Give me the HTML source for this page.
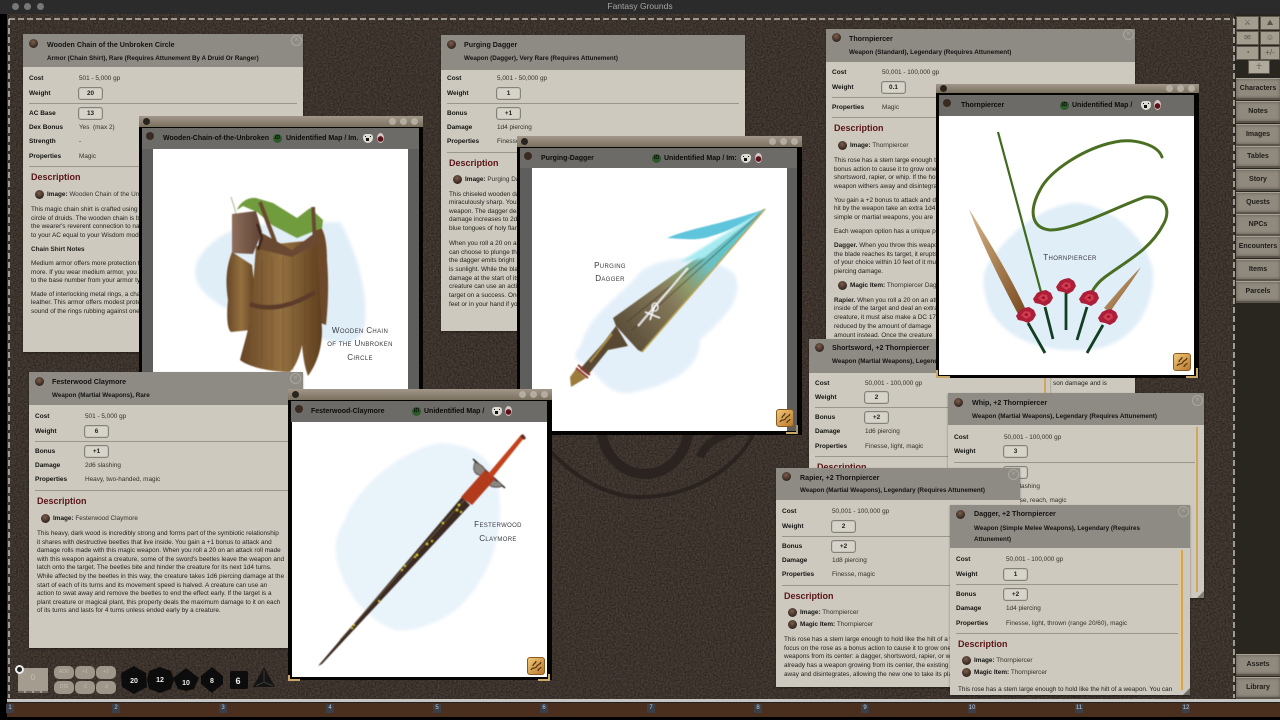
<!DOCTYPE html>
<html><head><meta charset="utf-8"><title>Fantasy Grounds</title>
<style>
html,body{margin:0;padding:0;width:1280px;height:720px;overflow:hidden;background:#000}
body{position:relative;font-family:"Liberation Sans",sans-serif;filter:blur(.3px)}
svg{position:absolute;left:0;top:0}
.tb{position:absolute;left:0;top:0;width:1280px;height:14px;background:#2b2b2b;color:#a5a5a5;font-size:8.5px;line-height:12px;text-align:center}
.dot{position:absolute;top:3px;width:7px;height:7px;border-radius:50%;background:#777}
.p{position:absolute;background:#cdc9be;overflow:hidden;color:#1f1e1b;font-size:6.4px;box-shadow:0 1px 2px #0006}
.p>*{position:absolute;white-space:nowrap;line-height:10px}
.h{left:0;top:0;width:100%;background:#8e8b85}
.t{left:24px;top:5px;font-weight:bold;font-size:7.1px;color:#141311}
.s{left:24px;top:19px;font-weight:bold;font-size:6.3px;color:#141311}
.l{left:6px;font-weight:bold;font-size:6.5px;color:#141311;margin-top:1px}
.v{left:56px;color:#33312c;margin-top:1px}
.b{left:55px;width:23px;height:11px;border:1px solid #85827a;border-radius:3px;background:#d6d3c9;text-align:center;font-weight:bold;line-height:11px!important;box-shadow:inset 0 0 1px #777;margin-top:1px}
.r{left:6px;right:6px;height:1px;background:#9a968a}
.d{left:8px;font-weight:bold;font-size:9px;line-height:12px!important;color:#5a1517}
.x{left:8px;color:#1f1e1a;margin-top:1px}
.o{left:12px;width:9px;height:9px;border-radius:50%;background:radial-gradient(circle at 45% 35%,#7c5e4c,#33261f 70%);margin-top:1px}
.i{left:24px;color:#33312c;margin-top:1px}.i b{color:#141311}
.c{width:9px;height:9px;border:1px solid #aaa79e;border-radius:50%;color:#aaa79e;font-size:8px;line-height:8px!important;text-align:center;box-sizing:content-box}
.g{width:2px;background:#cfa65c;border-left:1px solid #e7c98f}
.w{position:absolute;background:#050403}
.w>*{position:absolute}
.st{left:0;top:0;right:0;background:linear-gradient(#a2978a,#7a705e)}
.st>*{position:absolute}
.wh{background:#6d6b67;font-size:7px;font-weight:bold;color:#0d0c0a;line-height:21px;white-space:nowrap;overflow:hidden}
.wh>*{position:absolute}
.fr{background:#5e5e5d}
.im{background:#fff;overflow:hidden}
.id{width:9px;height:9px;border-radius:50%;background:#2d5a2a;color:#0d0d0b;font-size:5.5px;line-height:9px;text-align:center;top:6px}
.si{width:10px;height:9px;top:6px;border-radius:3px 3px 5px 5px;background:#dedbd2}
.si:before{content:"";position:absolute;left:2px;top:2px;width:1px;height:1px;background:#111;box-shadow:5px 0 #111,2px 3px 0 1px #111}
.ri{width:7px;height:10px;top:5px;border-radius:50%;background:radial-gradient(circle at 50% 60%,#5c1018 35%,#d8c8c4 45%)}
.wo{width:7px;height:7px;left:4px;top:2px;border-radius:50%;background:#2a241e}
.bt{width:7px;height:7px;top:2px;border-radius:50%;background:#c0bbb0;opacity:.75}
.ti{position:absolute;text-align:center;color:#3a3a40;font-size:8.1px;font-variant:small-caps;letter-spacing:.35px;white-space:nowrap;line-height:10px}
.sb{position:absolute;left:1236px;width:44px;height:19px;background:#8f897e;border-top:1px solid #a8a296;border-bottom:2px solid #5a544b;box-sizing:content-box;font-weight:bold;font-size:7px;color:#1f1c18;line-height:19px;text-align:center;box-shadow:inset 0 0 3px #5e584e}
.ic{position:absolute;height:14px;background:#a39d90;border:1px solid #5d574d;box-sizing:border-box;color:#5a5448;font-size:8px;line-height:12px;text-align:center}
.tab{position:absolute;top:704px;width:8px;height:9px;background:#3a3f4a;color:#c8c8c8;font-size:6px;line-height:9px;text-align:center}
.m{position:absolute;width:20px;height:13px;background:#9d9689;border-radius:5px;color:#c2beb2;font-size:5px;line-height:13px;text-align:center}
.corner{position:absolute;width:16px;height:8px;border-left:2px solid #c9a868;border-bottom:2px solid #c9a868}
.ci{position:absolute;width:18px;height:18px;border-radius:3px;background:linear-gradient(135deg,#f0c878,#b9772c);border:1px solid #8a5a20;box-sizing:border-box;overflow:hidden}
</style></head><body>

<svg width="1280" height="720" viewBox="0 0 1280 720">
<filter id="lea" x="0" y="0" width="100%" height="100%" color-interpolation-filters="sRGB"><feTurbulence type="fractalNoise" baseFrequency=".6" numOctaves="2" seed="4"/><feColorMatrix values=".24 0 0 0 .115 .2 0 0 0 .1 .18 0 0 0 .085 0 0 0 0 1"/></filter>
<rect x="7" y="14" width="1227" height="686" filter="url(#lea)"/>
<g fill="none" stroke="#2a2320">
<ellipse cx="645" cy="425" rx="44" ry="49" stroke-width="10"/>
<path d="M545,445 C575,480 610,497 640,497 C690,497 735,470 753,435" stroke-width="4"/>
<path d="M700,457 C705,445 715,437 735,432" stroke-width="8"/>
</g>
<rect x="1234" y="14" width="46" height="686" fill="#29251f"/>
<path d="M9,19 H1234" stroke="#d8d5cc" stroke-width="1.3" stroke-dasharray="6 3"/>
<path d="M9,19 V698" stroke="#d8d5cc" stroke-width="1.3" stroke-dasharray="6 3"/>
<path d="M1234,19 V698" stroke="#d8d5cc" stroke-width="1.3" stroke-dasharray="6 3"/>
<rect x="7" y="699" width="1273" height="3" fill="#c5c5c2"/>
<rect x="7" y="702" width="1273" height="1" fill="#222"/>
<rect x="7" y="703" width="1273" height="14" fill="#4a2f1f"/>
</svg>

<div class="tb">Fantasy Grounds</div>
<div class="dot" style="left:12px"></div><div class="dot" style="left:24px"></div><div class="dot" style="left:37px"></div>

<!-- Wooden Chain panel -->
<div class="p" style="left:23px;top:34px;width:280px;height:318px">
<div class="h" style="height:33px"></div><div class="o" style="left:6px;top:4px"></div>
<div class="t" style="top:6px">Wooden Chain of the Unbroken Circle</div>
<div class="s" style="top:20px">Armor (Chain Shirt), Rare (Requires Attunement By A Druid Or Ranger)</div>
<div class="c" style="left:268px;top:1px">×</div>
<div class="l" style="top:39px">Cost</div><div class="v" style="top:39px">501 - 5,000 gp</div>
<div class="l" style="top:54px">Weight</div><div class="b" style="top:52px">20</div>
<div class="r" style="top:69px"></div>
<div class="l" style="top:74px">AC Base</div><div class="b" style="top:72px">13</div>
<div class="l" style="top:88px">Dex Bonus</div><div class="v" style="top:88px">Yes &nbsp;(max 2)</div>
<div class="l" style="top:102px">Strength</div><div class="v" style="top:102px">-</div>
<div class="l" style="top:117px">Properties</div><div class="v" style="top:117px">Magic</div>
<div class="r" style="top:132px"></div>
<div class="d" style="top:137px">Description</div>
<div class="o" style="top:155px"></div><div class="i" style="top:155px"><b>Image:</b> Wooden Chain of the Unbroken Circle</div>
<div class="x" style="top:170px">This magic chain shirt is crafted using wood from a sacred grove by a</div>
<div class="x" style="top:179px">circle of druids. The wooden chain is bound to</div>
<div class="x" style="top:187px">the wearer's reverent connection to nature.</div>
<div class="x" style="top:196px">to your AC equal to your Wisdom modifier.</div>
<div class="x" style="top:210px;font-weight:bold">Chain Shirt Notes</div>
<div class="x" style="top:224px">Medium armor offers more protection than light</div>
<div class="x" style="top:233px">more. If you wear medium armor, you add your</div>
<div class="x" style="top:241px">to the base number from your armor type.</div>
<div class="x" style="top:255px">Made of interlocking metal rings, a chain shirt</div>
<div class="x" style="top:263px">leather. This armor offers modest protection</div>
<div class="x" style="top:272px">sound of the rings rubbing against one another.</div>
</div>

<!-- Purging Dagger panel -->
<div class="p" style="left:441px;top:35px;width:304px;height:296px">
<div class="h" style="height:35px"></div><div class="o" style="left:6px;top:4px"></div>
<div class="t" style="left:23px">Purging Dagger</div>
<div class="s" style="left:23px">Weapon (Dagger), Very Rare (Requires Attunement)</div>
<div class="l" style="top:38px">Cost</div><div class="v" style="top:38px">5,001 - 50,000 gp</div>
<div class="l" style="top:53px">Weight</div><div class="b" style="top:51px">1</div>
<div class="r" style="top:68px"></div>
<div class="l" style="top:73px">Bonus</div><div class="b" style="top:71px">+1</div>
<div class="l" style="top:87px">Damage</div><div class="v" style="top:87px">1d4 piercing</div>
<div class="l" style="top:101px">Properties</div><div class="v" style="top:101px">Finesse, light</div>
<div class="r" style="top:117px"></div>
<div class="d" style="top:122px">Description</div>
<div class="o" style="top:139px"></div><div class="i" style="top:139px"><b>Image:</b> Purging Dagger</div>
<div class="x" style="top:154px">This chiseled wooden dagger</div>
<div class="x" style="top:162px">miraculously sharp. You gain</div>
<div class="x" style="top:171px">weapon. The dagger deals</div>
<div class="x" style="top:179px">damage increases to 2d4</div>
<div class="x" style="top:188px">blue tongues of holy flame</div>
<div class="x" style="top:203px">When you roll a 20 on an attack</div>
<div class="x" style="top:212px">can choose to plunge the</div>
<div class="x" style="top:220px">the dagger emits bright</div>
<div class="x" style="top:229px">is sunlight. While the blade</div>
<div class="x" style="top:238px">damage at the start of its</div>
<div class="x" style="top:246px">creature can use an action</div>
<div class="x" style="top:255px">target on a success. Once</div>
<div class="x" style="top:264px">feet or in your hand if you</div>
</div>

<!-- Thornpiercer panel -->
<div class="p" style="left:826px;top:29px;width:309px;height:364px">
<div class="h" style="height:33px"></div><div class="o" style="left:6px;top:3px"></div>
<div class="t" style="left:23px">Thornpiercer</div>
<div class="s" style="left:23px">Weapon (Standard), Legendary (Requires Attunement)</div>
<div class="c" style="left:297px;top:0">×</div>
<div class="l" style="top:38px">Cost</div><div class="v" style="top:38px">50,001 - 100,000 gp</div>
<div class="l" style="top:53px">Weight</div><div class="b" style="top:51px">0.1</div>
<div class="r" style="top:68px"></div>
<div class="l" style="top:73px">Properties</div><div class="v" style="top:73px">Magic</div>
<div class="r" style="top:88px"></div>
<div class="d" style="top:93px">Description</div>
<div class="o" style="top:111px"></div><div class="i" style="top:111px"><b>Image:</b> Thornpiercer</div>
<div class="x" style="top:126px">This rose has a stem large enough to hold</div>
<div class="x" style="top:135px">bonus action to cause it to grow one of</div>
<div class="x" style="top:143px">shortsword, rapier, or whip. If the holder</div>
<div class="x" style="top:152px">weapon withers away and disintegrates</div>
<div class="x" style="top:166px">You gain a +2 bonus to attack and damage</div>
<div class="x" style="top:174px">hit by the weapon take an extra 1d4</div>
<div class="x" style="top:183px">simple or martial weapons, you are</div>
<div class="x" style="top:197px">Each weapon option has a unique power</div>
<div class="x" style="top:211px"><b>Dagger.</b> When you throw this weapon</div>
<div class="x" style="top:220px">the blade reaches its target, it erupts</div>
<div class="x" style="top:228px">of your choice within 10 feet of it must</div>
<div class="x" style="top:237px">piercing damage.</div>
<div class="o" style="top:251px"></div><div class="i" style="top:251px"><b>Magic Item:</b> Thornpiercer Dagger</div>
<div class="x" style="top:266px"><b>Rapier.</b> When you roll a 20 on an attack</div>
<div class="x" style="top:274px">inside of the target and deal an extra</div>
<div class="x" style="top:283px">creature, it must also make a DC 17</div>
<div class="x" style="top:292px">reduced by the amount of damage</div>
<div class="x" style="top:301px">amount instead. Once the creature</div>
<div class="x" style="top:349px;left:227px">son damage and is</div>
</div>

<!-- Shortsword panel -->
<div class="p" style="left:809px;top:339px;width:241px;height:165px">
<div class="h" style="height:34px"></div><div class="o" style="left:6px;top:3px"></div>
<div class="t" style="left:23px;top:4px">Shortsword, +2 Thornpiercer</div>
<div class="s" style="left:23px;top:18px">Weapon (Martial Weapons), Legendary (Requires Attunement)</div>
<div class="l" style="top:39px">Cost</div><div class="v" style="top:39px">50,001 - 100,000 gp</div>
<div class="l" style="top:53px">Weight</div><div class="b" style="top:51px">2</div>
<div class="r" style="top:68px"></div>
<div class="l" style="top:73px">Bonus</div><div class="b" style="top:71px">+2</div>
<div class="l" style="top:87px">Damage</div><div class="v" style="top:87px">1d6 piercing</div>
<div class="l" style="top:102px">Properties</div><div class="v" style="top:102px">Finesse, light, magic</div>
<div class="r" style="top:117px"></div>
<div class="d" style="top:122px">Description</div>
<div class="g" style="left:234px;top:36px;height:120px"></div>
</div>

<!-- Image window 1 -->
<div class="w" style="left:139px;top:116px;width:284px;height:274px">
<div class="st" style="height:11px"><i class="wo"></i><i class="bt" style="left:250px"></i><i class="bt" style="left:261px"></i><i class="bt" style="left:272px"></i></div>
<div class="fr" style="left:3px;top:12px;width:277px;height:262px"></div>
<div class="wh" style="left:3px;top:12px;width:277px;height:21px"><i class="wo" style="left:4px;top:4px;width:8px;height:8px;background:#3a2b22"></i><span style="left:21px">Wooden-Chain-of-the-Unbroken</span><i class="id" style="left:131px">ID</i><span style="left:144px">Unidentified Map / Im.</span><i class="si" style="left:221px"></i><i class="ri" style="left:235px"></i></div>
<div class="im" style="left:14px;top:33px;width:255px;height:241px"></div>
</div>
<svg width="1280" height="720" viewBox="0 0 1280 720" style="pointer-events:none">
<defs>
<filter id="bl"><feGaussianBlur stdDeviation="1.5"/></filter>
<filter id="bs"><feGaussianBlur stdDeviation=".5"/></filter>
<filter id="bf"><feGaussianBlur stdDeviation="1.2"/></filter>
<linearGradient id="wd" x1="0" x2="1"><stop offset="0" stop-color="#664626"/><stop offset=".5" stop-color="#94703f"/><stop offset="1" stop-color="#5f3f20"/></linearGradient>
<linearGradient id="br" x1="0" x2="1"><stop offset="0" stop-color="#8e6e5c"/><stop offset="1" stop-color="#5e4232"/></linearGradient>
<linearGradient id="bd" gradientUnits="userSpaceOnUse" x1="620" y1="330" x2="765" y2="209"><stop offset="0" stop-color="#5c4f3a"/><stop offset=".3" stop-color="#84785a"/><stop offset=".42" stop-color="#8f9a6a"/><stop offset=".58" stop-color="#6cc0c0"/><stop offset="1" stop-color="#45d0e0"/></linearGradient>
<linearGradient id="sp" x1="0" y1="0" x2="1" y2="1"><stop offset="0" stop-color="#d8b88a"/><stop offset="1" stop-color="#7a4a20"/></linearGradient>
<g id="rose"><path d="M-10,1 L-6,-5 L-2,-7 L3,-8 L8,-5 L10,0 L7,5 L2,8 L-3,6 L-8,5Z" fill="#ad1f38"/><path d="M-5,0 L-1,-4 L4,-3 L5,1 L0,4Z" fill="#d43a50"/><path d="M-2,0 L1,-2 L2,1Z" fill="#7a1020"/></g>
</defs>
<path d="M197,262 C208,240 232,228 250,225 L340,222 C356,250 368,290 365,325 C360,345 345,345 325,340 L232,312 C206,297 190,285 197,262Z" fill="#e0eef8" filter="url(#bl)"/>
<g filter="url(#bs)">
<path d="M231,197 L234,206 L236,214" stroke="#b9bfa0" fill="none" stroke-width="1.2"/>
<path d="M232,252 C225,270 226,285 228,300 C226,320 228,330 231,332 L251,330 L256,300 L252,265Z" fill="url(#wd)"/>
<path d="M315,222 C324,226 327,240 327,260 C329,285 328,305 326,325 L318,322 L314,280Z" fill="#6d4a2a"/>
<path d="M256,246 L316,240 C318,265 320,285 320,295 L322,330 C322,350 316,365 308,376 C304,365 303,355 302,345 C300,355 296,366 290,372 C275,372 250,368 240,360 C245,340 252,320 252,300Z" fill="url(#wd)"/>
<path d="M262,260 V360 M272,258 V368 M283,256 V372 M293,256 V370 M305,254 V345 M313,250 V340" stroke="#5a3a1e" stroke-width=".6" opacity=".5"/>
<path d="M260,232 L292,250 L316,232 L316,244 L292,257 L258,249Z" fill="#6b4932"/>
<path d="M237,210 C240,202 248,197 256,198 L273,203 L297,218 L310,208 L323,220 L322,228 L297,238 L272,225 L257,212 L243,206Z" fill="#6f9c3c"/>
<path d="M260,202 L277,247 M313,207 L315,243" stroke="#6b4a30" stroke-width="4" fill="none"/>
<path d="M232,214 L256,211 L262,232 L253,254 L232,253Z" fill="url(#br)"/>
<path d="M257,224 L262,238 L258,250" stroke="#3c281a" stroke-width="2.5" fill="none"/>
<path d="M250,304 C270,312 295,305 315,292" stroke="#5b3b2b" stroke-width="4.5" fill="none"/>
</g>
</svg>
<div class="ti" style="left:305px;width:110px;top:326px">Wooden Chain</div>
<div class="ti" style="left:305px;width:110px;top:339px">of the Unbroken</div>
<div class="ti" style="left:305px;width:110px;top:353px">Circle</div>

<!-- Festerwood panel -->
<div class="p" style="left:29px;top:372px;width:274px;height:276px">
<div class="h" style="height:33px"></div><div class="o" style="left:6px;top:4px"></div>
<div class="t" style="left:23px;top:5px">Festerwood Claymore</div>
<div class="s" style="left:23px;top:19px">Weapon (Martial Weapons), Rare</div>
<div class="c" style="left:261px;top:1px">×</div>
<div class="l" style="top:39px">Cost</div><div class="v" style="top:39px">501 - 5,000 gp</div>
<div class="l" style="top:54px">Weight</div><div class="b" style="top:52px">6</div>
<div class="r" style="top:69px"></div>
<div class="l" style="top:74px">Bonus</div><div class="b" style="top:72px">+1</div>
<div class="l" style="top:88px">Damage</div><div class="v" style="top:88px">2d6 slashing</div>
<div class="l" style="top:102px">Properties</div><div class="v" style="top:102px">Heavy, two-handed, magic</div>
<div class="r" style="top:118px"></div>
<div class="d" style="top:123px">Description</div>
<div class="o" style="top:141px"></div><div class="i" style="top:141px"><b>Image:</b> Festerwood Claymore</div>
<div class="x" style="top:156px">This heavy, dark wood is incredibly strong and forms part of the symbiotic relationship</div>
<div class="x" style="top:165px">it shares with destructive beetles that live inside. You gain a +1 bonus to attack and</div>
<div class="x" style="top:173px">damage rolls made with this magic weapon. When you roll a 20 on an attack roll made</div>
<div class="x" style="top:182px">with this weapon against a creature, some of the sword's beetles leave the weapon and</div>
<div class="x" style="top:190px">latch onto the target. The beetles bite and hinder the creature for its next 1d4 turns.</div>
<div class="x" style="top:199px">While affected by the beetles in this way, the creature takes 1d6 piercing damage at the</div>
<div class="x" style="top:208px">start of each of its turns and its movement speed is halved. A creature can use an</div>
<div class="x" style="top:216px">action to swat away and remove the beetles to end the effect early. If the target is a</div>
<div class="x" style="top:225px">plant creature or magical plant, this property deals the maximum damage to it on each</div>
<div class="x" style="top:233px">of its turns and lasts for 4 turns unless ended early by a creature.</div>
</div>

<!-- Image window 2 -->
<div class="w" style="left:517px;top:136px;width:285px;height:299px">
<div class="st" style="height:11px"><i class="wo"></i><i class="bt" style="left:252px"></i><i class="bt" style="left:263px"></i><i class="bt" style="left:274px"></i></div>
<div class="fr" style="left:3px;top:12px;width:277px;height:283px"></div>
<div class="wh" style="left:3px;top:12px;width:277px;height:20px"><i class="wo" style="left:4px;top:4px;width:8px;height:8px;background:#3a2b22"></i><span style="left:21px">Purging-Dagger</span><i class="id" style="left:132px">ID</i><span style="left:144px">Unidentified Map / Im:</span><i class="si" style="left:221px"></i><i class="ri" style="left:235px"></i></div>
<div class="im" style="left:15px;top:32px;width:255px;height:263px"></div>
</div>
<svg width="1280" height="720" viewBox="0 0 1280 720">
<path d="M581,345 C590,312 620,298 640,272 C670,250 720,258 735,275 C745,300 722,320 700,340 C700,370 670,385 630,393 C605,395 600,375 585,365 C574,360 572,355 581,345Z" fill="#e4f0f9" filter="url(#bl)"/>
<path d="M667,238 C690,228 720,225 765,209 C750,222 725,232 715,235 C700,240 695,240 667,238Z" fill="#5fc5dc" filter="url(#bs)"/>
<g filter="url(#bs)">
<path d="M765,209 L613,318 L616,326 L638,350 L642,352Z" fill="url(#bd)"/>
<path d="M765,209 L632,330 M765,209 L627,322" stroke="#3e3524" stroke-width="1.1" opacity=".55"/>
<path d="M642,352 L765,209" stroke="#b9a34e" stroke-width="1.5"/>
<path d="M638,326 L688,268" stroke="#fff" stroke-width="2" opacity=".85"/>
<path d="M655,305 L650,320 M645,312 L660,318" stroke="#fff" stroke-width="1.4" fill="none"/>
<ellipse cx="655" cy="307" rx="3" ry="4" fill="none" stroke="#fff" stroke-width="1.1"/>
<path d="M616,326 L628,346 L608,350 L588,375 L580,369 L604,342Z" fill="#5a4830"/>
<path d="M612,334 L590,362" stroke="#a88a48" stroke-width="2"/>
<path d="M576,368 L588,378 M578,365 L590,375" stroke="#8e3326" stroke-width="1.8"/>
<path d="M576,369 L586,378 L571,387 L570,377Z" fill="#9b7c3c"/>
</g>
<path d="M680,262 L765,209 L705,258Z" fill="#a4eaf0" filter="url(#bf)"/>
</svg>
<div class="ti" style="left:570px;width:80px;top:261px">Purging</div>
<div class="ti" style="left:570px;width:80px;top:274px">Dagger</div>
<div class="ci" style="left:776px;top:409px"><svg width="16" height="16" viewBox="0 0 16 16"><path d="M3,12 C5,8 7,12 9,8 C10,6 12,7 13,4 M8,3 C8,6 5,5 5,8 M10,13 C10,10 13,11 13,9" stroke="#50320f" stroke-width="1.2" fill="none"/></svg></div>
<div class="corner" style="left:786px;top:425px;width:10px;height:7px;border-left:none;border-right:2px solid #9a9468"></div>

<!-- Image window 4 -->
<div class="w" style="left:288px;top:389px;width:264px;height:291px">
<div class="st" style="height:11px"><i class="wo"></i><i class="bt" style="left:231px"></i><i class="bt" style="left:242px"></i><i class="bt" style="left:253px"></i></div>
<div class="wh" style="left:3px;top:12px;width:256px;height:21px"><i class="wo" style="left:4px;top:4px;width:8px;height:8px;background:#3a2b22"></i><span style="left:20px">Festerwood-Claymore</span><i class="id" style="left:121px">ID</i><span style="left:133px">Unidentified Map /</span><i class="si" style="left:201px"></i><i class="ri" style="left:214px"></i></div>
<div class="im" style="left:4px;top:33px;width:255px;height:255px"></div>
</div>
<svg width="1280" height="720" viewBox="0 0 1280 720">
<path d="M345,520 C355,490 400,450 440,443 C470,445 490,455 497,480 C505,520 495,560 480,580 C465,610 430,632 395,630 C370,620 350,600 340,570 C333,550 335,535 345,520Z" fill="#e8f3fa" filter="url(#bl)"/>
<g filter="url(#bs)">
<path d="M318,666 L462,497 L470,505 L322,664Z" fill="#3a2a20"/>
<path d="M340,640 L466,498" stroke="#6e5a46" stroke-width=".8"/>
<g fill="#e0d02a"><circle cx="352" cy="628" r="1"/><circle cx="354" cy="625" r="1"/><circle cx="379" cy="601" r="1"/><circle cx="405" cy="566" r="1"/><circle cx="417" cy="555" r="1.2"/><circle cx="415" cy="557" r="1"/><circle cx="427" cy="544" r="1.2"/><circle cx="432" cy="541" r="1"/><circle cx="443" cy="523" r="1.1"/><circle cx="457" cy="510" r="1.2"/><circle cx="459" cy="505" r="1.2"/><circle cx="461" cy="512" r="1"/><circle cx="402" cy="570" r="1"/></g>
<path d="M473,459 L505,488" stroke="#1e1a18" stroke-width="1.5"/>
<path d="M475,462 Q470,475 484,476 Q489,468 475,462Z M503,486 Q490,490 487,481 Q497,478 503,486Z" fill="#8b8780" stroke="#2a2625" stroke-width=".7"/>
<path d="M461,497 L485,470 L495,479 L472,505Z" fill="#b23a1c"/>
<path d="M488,474 L521,435 L524,438 L492,478Z" fill="#c2421e"/>
<path d="M520,436 L523,434 L526,438 L524,440Z" fill="#5a2a1c"/>
</g>
</svg>
<div class="ti" style="left:458px;width:80px;top:520px">Festerwood</div>
<div class="ti" style="left:458px;width:80px;top:534px">Claymore</div>
<div class="ci" style="left:527px;top:657px"><svg width="16" height="16" viewBox="0 0 16 16"><path d="M3,12 C5,8 7,12 9,8 C10,6 12,7 13,4 M8,3 C8,6 5,5 5,8 M10,13 C10,10 13,11 13,9" stroke="#50320f" stroke-width="1.2" fill="none"/></svg></div>
<div class="corner" style="left:288px;top:675px;width:10px;height:4px"></div>
<div class="corner" style="left:538px;top:674px;width:10px;height:5px;border-left:none;border-right:2px solid #c9a868"></div>

<!-- Whip panel -->
<div class="p" style="left:948px;top:393px;width:256px;height:205px">
<div class="h" style="height:32px"></div><div class="o" style="left:6px;top:4px"></div>
<div class="t" style="top:5px">Whip, +2 Thornpiercer</div>
<div class="s" style="top:19px">Weapon (Martial Weapons), Legendary (Requires Attunement)</div>
<div class="c" style="left:244px;top:2px">×</div>
<div class="l" style="top:39px">Cost</div><div class="v" style="top:39px">50,001 - 100,000 gp</div>
<div class="l" style="top:53px">Weight</div><div class="b" style="top:51px">3</div>
<div class="r" style="top:69px"></div>
<div class="l" style="top:74px">Bonus</div><div class="b" style="top:72px">+2</div>
<div class="l" style="top:88px">Damage</div><div class="v" style="top:88px">1d4 slashing</div>
<div class="l" style="top:102px">Properties</div><div class="v" style="top:102px">Finesse, reach, magic</div>
<div class="g" style="left:247px;top:34px;height:165px"></div>
<div style="right:0;bottom:0;width:0;height:0;border-style:solid;border-width:0 0 7px 7px;border-color:transparent transparent #7f7c76 transparent"></div>
</div>

<!-- Rapier panel -->
<div class="p" style="left:776px;top:468px;width:244px;height:219px">
<div class="h" style="height:32px"></div><div class="o" style="left:6px;top:3px"></div>
<div class="t" style="top:5px">Rapier, +2 Thornpiercer</div>
<div class="s" style="top:18px">Weapon (Martial Weapons), Legendary (Requires Attunement)</div>
<div class="c" style="left:232px;top:1px">×</div>
<div class="l" style="top:38px">Cost</div><div class="v" style="top:38px">50,001 - 100,000 gp</div>
<div class="l" style="top:53px">Weight</div><div class="b" style="top:51px">2</div>
<div class="r" style="top:68px"></div>
<div class="l" style="top:73px">Bonus</div><div class="b" style="top:71px">+2</div>
<div class="l" style="top:87px">Damage</div><div class="v" style="top:87px">1d8 piercing</div>
<div class="l" style="top:101px">Properties</div><div class="v" style="top:101px">Finesse, magic</div>
<div class="r" style="top:117px"></div>
<div class="d" style="top:122px">Description</div>
<div class="o" style="top:139px"></div><div class="i" style="top:139px"><b>Image:</b> Thornpiercer</div>
<div class="o" style="top:151px"></div><div class="i" style="top:151px"><b>Magic Item:</b> Thornpiercer</div>
<div class="x" style="top:166px">This rose has a stem large enough to hold like the hilt of a weapon. You can</div>
<div class="x" style="top:175px">focus on the rose as a bonus action to cause it to grow one of</div>
<div class="x" style="top:183px">weapons from its center: a dagger, shortsword, rapier, or whip.</div>
<div class="x" style="top:192px">already has a weapon growing from its center, the existing</div>
<div class="x" style="top:201px">away and disintegrates, allowing the new one to take its place.</div>
</div>

<!-- Dagger panel -->
<div class="p" style="left:950px;top:505px;width:240px;height:190px">
<div class="h" style="height:43px"></div><div class="o" style="left:6px;top:4px"></div>
<div class="t" style="top:4px">Dagger, +2 Thornpiercer</div>
<div class="s" style="top:19px">Weapon (Simple Melee Weapons), Legendary (Requires</div>
<div class="s" style="top:30px">Attunement)</div>
<div class="c" style="left:228px;top:1px">×</div>
<div class="l" style="top:49px">Cost</div><div class="v" style="top:49px">50,001 - 100,000 gp</div>
<div class="l" style="top:64px">Weight</div><div class="b" style="top:62px;left:53px">1</div>
<div class="r" style="top:79px;right:12px"></div>
<div class="l" style="top:84px">Bonus</div><div class="b" style="top:82px;left:53px">+2</div>
<div class="l" style="top:98px">Damage</div><div class="v" style="top:98px">1d4 piercing</div>
<div class="l" style="top:113px">Properties</div><div class="v" style="top:113px">Finesse, light, thrown (range 20/60), magic</div>
<div class="r" style="top:128px;right:12px"></div>
<div class="d" style="top:133px">Description</div>
<div class="o" style="top:150px"></div><div class="i" style="top:150px"><b>Image:</b> Thornpiercer</div>
<div class="o" style="top:162px"></div><div class="i" style="top:162px"><b>Magic Item:</b> Thornpiercer</div>
<div class="x" style="top:179px">This rose has a stem large enough to hold like the hilt of a weapon. You can</div>
<div class="g" style="left:230px;top:45px;height:140px"></div>
<div style="right:0;bottom:0;width:0;height:0;border-style:solid;border-width:0 0 7px 7px;border-color:transparent transparent #6f6c66 transparent"></div>
</div>

<!-- Image window 3 -->
<div class="w" style="left:936px;top:84px;width:263px;height:294px">
<div class="st" style="height:9px"><i class="wo" style="top:1px"></i><i class="bt" style="left:230px;top:1px"></i><i class="bt" style="left:241px;top:1px"></i><i class="bt" style="left:252px;top:1px"></i></div>
<div class="wh" style="left:3px;top:11px;width:255px;height:21px"><i class="wo" style="left:4px;top:4px;width:8px;height:8px;background:#3a2b22"></i><span style="left:22px">Thornpiercer</span><i class="id" style="left:121px">ID</i><span style="left:133px">Unidentified Map /</span><i class="si" style="left:202px"></i><i class="ri" style="left:215px"></i></div>
<div class="im" style="left:3px;top:32px;width:255px;height:259px"></div>
</div>
<svg width="1280" height="720" viewBox="0 0 1280 720">
<path d="M985,270 C1000,240 1040,205 1075,203 C1110,205 1145,235 1153,270 C1155,305 1135,345 1090,350 C1050,352 1010,345 990,310 C984,295 982,285 985,270Z" fill="#e0eef8" filter="url(#bl)"/>
<path d="M969,209 C985,235 1010,275 1025,308 L1018,314 C1000,280 980,240 969,209Z" fill="url(#sp)"/>
<path d="M1141,267 C1130,285 1118,300 1110,312 L1104,308 C1115,295 1128,280 1141,267Z" fill="url(#sp)"/>
<path d="M998,132 L1041,292" stroke="#3d6b1f" stroke-width="2.2"/>
<path d="M1162,157 C1158,145 1135,138 1115,142 C1085,148 1050,170 1040,190 C1028,212 1032,228 1050,230 C1075,230 1120,205 1145,197 C1165,195 1172,210 1163,225 C1150,250 1125,262 1105,277 C1097,283 1094,288 1092,292" stroke="#4a6e22" stroke-width="3" fill="none" stroke-linecap="round"/>
<g stroke="#123f22" stroke-width="2.8"><path d="M1028,323 L1045,353"/><path d="M1045,307 L1053,339"/><path d="M1066,293 L1066,330"/><path d="M1087,307 L1077,340"/><path d="M1103,325 L1087,353"/></g>
<use href="#rose" x="1026" y="315"/><use href="#rose" x="1043" y="298"/><use href="#rose" x="1066" y="286"/><use href="#rose" x="1089" y="298"/><use href="#rose" x="1108" y="317"/>
</svg>
<div class="ti" style="left:1030px;width:80px;top:253px">Thornpiercer</div>
<div class="ci" style="left:1173px;top:353px"><svg width="16" height="16" viewBox="0 0 16 16"><path d="M3,12 C5,8 7,12 9,8 C10,6 12,7 13,4 M8,3 C8,6 5,5 5,8 M10,13 C10,10 13,11 13,9" stroke="#50320f" stroke-width="1.2" fill="none"/></svg></div>
<div class="corner" style="left:936px;top:370px;width:12px;height:6px"></div>
<div class="corner" style="left:1186px;top:368px;width:10px;height:8px;border-left:none;border-right:2px solid #c9a868"></div>

<!-- Sidebar -->
<div class="ic" style="left:1236px;top:16px;width:23px">⚔</div><div class="ic" style="left:1260px;top:16px;width:20px">⛰</div>
<div class="ic" style="left:1236px;top:31px;width:23px">✉</div><div class="ic" style="left:1260px;top:31px;width:20px">☺</div>
<div class="ic" style="left:1236px;top:46px;width:23px">◔</div><div class="ic" style="left:1260px;top:46px;width:20px">+/-</div>
<div class="ic" style="left:1248px;top:60px;width:22px;background:#b0aa9d">☥</div>
<div class="sb" style="top:78px">Characters</div>
<div class="sb" style="top:101px">Notes</div>
<div class="sb" style="top:124px">Images</div>
<div class="sb" style="top:146px">Tables</div>
<div class="sb" style="top:169px">Story</div>
<div class="sb" style="top:192px">Quests</div>
<div class="sb" style="top:214px">NPCs</div>
<div class="sb" style="top:236px">Encounters</div>
<div class="sb" style="top:259px">Items</div>
<div class="sb" style="top:281px">Parcels</div>
<div class="sb" style="top:654px">Assets</div>
<div class="sb" style="top:677px">Library</div>

<!-- Bottom tools -->
<div style="position:absolute;left:18px;top:668px;width:30px;height:25px;background:#a39c8f;color:#c4beb2;font-size:8px;text-align:center;line-height:20px;border-bottom:2px dashed #6d675c;box-sizing:border-box">0</div>
<div style="position:absolute;left:15px;top:665px;width:5px;height:5px;border:2px solid #eee;border-radius:50%;background:#222"></div>
<div class="m" style="left:54px;top:666px">ADV</div><div class="m" style="left:75px;top:666px">+1</div><div class="m" style="left:96px;top:666px">+2</div>
<div class="m" style="left:54px;top:681px">DIS</div><div class="m" style="left:75px;top:681px">-1</div><div class="m" style="left:96px;top:681px">-2</div>
<svg width="1280" height="720" viewBox="0 0 1280 720" font-family="Liberation Sans" font-weight="bold" font-size="7" fill="#eee" text-anchor="middle">
<polygon points="134,666 146,673 147,687 134,694 122,687 121,673" fill="#0d0c0c"/><text x="134" y="683">20</text>
<polygon points="160,667 171,671 174,680 171,689 160,693 149,689 147,680 149,671" fill="#0d0c0c"/><text x="160" y="682">12</text>
<polygon points="186,668 199,678 194,689 186,691 178,689 173,678" fill="#0d0c0c"/><text x="186" y="685">10</text>
<polygon points="212,667 223,676 223,684 212,693 201,684 201,676" fill="#0d0c0c"/><text x="212" y="683">8</text>
<rect x="230" y="671" width="18" height="18" rx="2" fill="#0d0c0c"/><text x="238" y="684" font-size="9">6</text>
<polygon points="264,667 275,687 253,687" fill="#151413"/><path d="M264,670 V682 L256,686 M264,682 L273,686" stroke="#3a3a3a" fill="none"/>
</svg>
<div class="tab" style="left:6px">1</div><div class="tab" style="left:112px">2</div><div class="tab" style="left:219px">3</div><div class="tab" style="left:326px">4</div><div class="tab" style="left:433px">5</div><div class="tab" style="left:540px">6</div><div class="tab" style="left:647px">7</div><div class="tab" style="left:754px">8</div><div class="tab" style="left:861px">9</div><div class="tab" style="left:968px">10</div><div class="tab" style="left:1075px">11</div><div class="tab" style="left:1182px">12</div>
</body></html>
